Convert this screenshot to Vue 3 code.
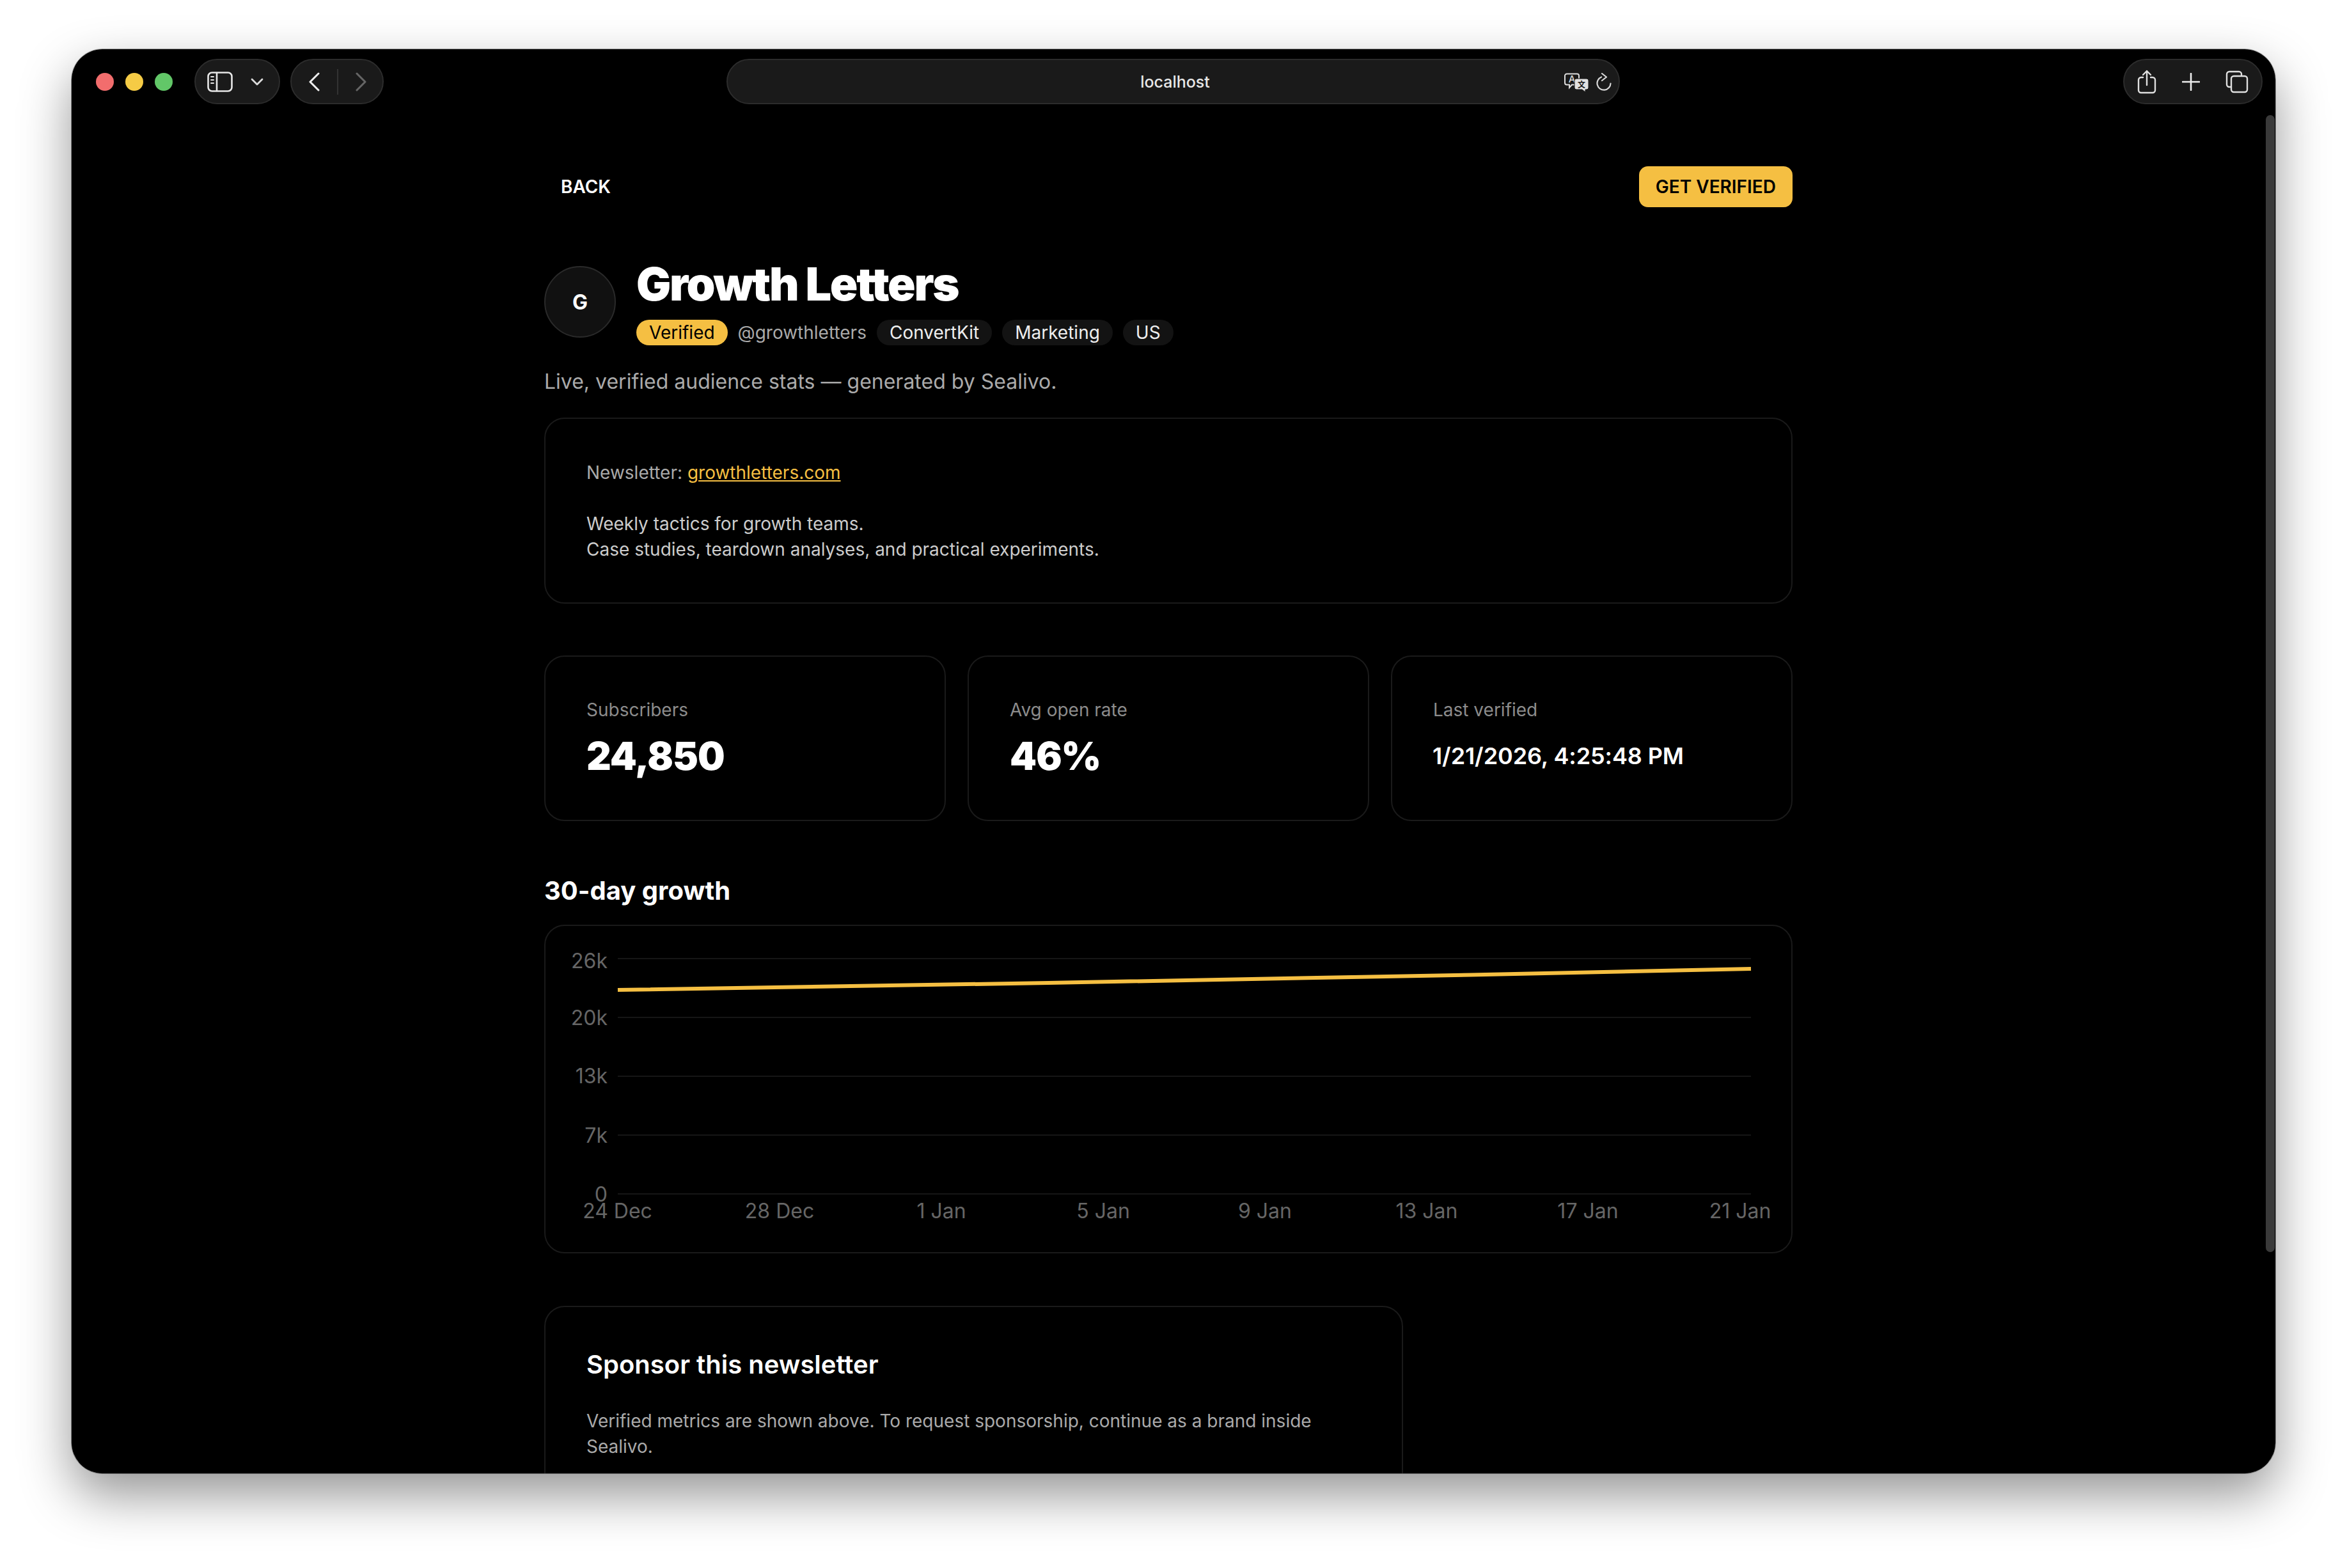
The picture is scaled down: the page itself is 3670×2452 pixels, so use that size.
<script setup>
const L = 853, T = 1447
const grid = [1498, 1590, 1682, 1774, 1866]
const yLabels = [
  { t: '26k', y: 1502 }, { t: '20k', y: 1591 }, { t: '13k', y: 1682 }, { t: '7k', y: 1775 }, { t: '0', y: 1867 },
]
const xLabels = [
  ['24 Dec', 965.5], ['28 Dec', 1219], ['1 Jan', 1472], ['5 Jan', 1725],
  ['9 Jan', 1978], ['13 Jan', 2231], ['17 Jan', 2483], ['21 Jan', 2721],
]
const line = [[966, 1547], [1640, 1536], [2300, 1523.5], [2738, 1514]]
  .map(([x, y]) => `${x - L},${y - T}`).join(' ')
const gx1 = 966 - L, gx2 = 2738 - L
const stats = [
  { label: 'Subscribers', value: '24,850', big: true },
  { label: 'Avg open rate', value: '46%', big: true },
  { label: 'Last verified', value: '1/21/2026, 4:25:48 PM', big: false },
]
</script>

<template>
  <div class="stage">
    <div class="window">
      <header class="toolbar">
        <div class="lights">
          <span class="light red"></span><span class="light yellow"></span><span class="light green"></span>
        </div>
        <div class="pill side">
          <svg width="40" height="32" viewBox="0 0 40 32" fill="none" stroke="#e6e6e6" stroke-width="2.6" stroke-linecap="round">
            <rect x="1.5" y="1.5" width="37" height="29" rx="6" />
            <path d="M15 2v28" />
            <path d="M6 8h4M6 13h4M6 18h4" stroke-width="2" />
          </svg>
          <svg width="20" height="12" viewBox="0 0 20 12" fill="none" stroke="#dcdcdc" stroke-width="2.8" stroke-linecap="round" stroke-linejoin="round">
            <path d="M2 2l8 8 8-8" />
          </svg>
        </div>
        <div class="pill nav">
          <svg width="18" height="30" viewBox="0 0 18 30" fill="none" stroke="#eee" stroke-width="3" stroke-linecap="round" stroke-linejoin="round">
            <path d="M16 2L3 15l13 13" />
          </svg>
          <span class="sep"></span>
          <svg width="18" height="30" viewBox="0 0 18 30" fill="none" stroke="#666" stroke-width="3" stroke-linecap="round" stroke-linejoin="round">
            <path d="M2 2l13 13L2 28" />
          </svg>
        </div>
        <div class="url">
          <span class="host">localhost</span>
          <svg class="translate" width="40" height="30" viewBox="0 0 40 30" fill="none">
            <path d="M4 1.5h16a3 3 0 0 1 3 3v11a3 3 0 0 1-3 3h-8l-4 4.5v-4.5H4a3 3 0 0 1-3-3v-11a3 3 0 0 1 3-3z" stroke="#ddd" stroke-width="2" />
            <text x="12" y="15" class="glyph-a">A</text>
            <path d="M19 9h16a3 3 0 0 1 3 3v11a3 3 0 0 1-3 3h-2v4l-5-4h-9a3 3 0 0 1-3-3V12a3 3 0 0 1 3-3z" fill="#e2e2e2" stroke="#1a1a1a" stroke-width="1" />
            <text x="27" y="23" class="glyph-z">文</text>
          </svg>
          <svg class="reload" width="24" height="28" viewBox="0 0 24 28" fill="none" stroke="#d8d8d8" stroke-width="2.2" stroke-linecap="round" stroke-linejoin="round">
            <path d="M8 6.5A10.5 10.5 0 1 0 22.5 16.500" />
            <path d="M9 1l7 5.500-7 5.500" />
          </svg>
        </div>
        <div class="pill tools">
          <svg width="30" height="38" viewBox="0 0 30 38" fill="none" stroke="#e0e0e0" stroke-width="2.4" stroke-linecap="round" stroke-linejoin="round">
            <path d="M9 12H6a4 4 0 0 0-4 4v16a4 4 0 0 0 4 4h18a4 4 0 0 0 4-4V16a4 4 0 0 0-4-4h-3" />
            <path d="M15 24V2M9 8l6-6 6 6" />
          </svg>
          <svg width="28" height="28" viewBox="0 0 28 28" fill="none" stroke="#eee" stroke-width="2.6" stroke-linecap="round">
            <path d="M14 1v26M1 14h26" />
          </svg>
          <svg width="36" height="36" viewBox="0 0 36 36" fill="none" stroke="#e0e0e0" stroke-width="2.400">
            <path d="M8 26H6a4 4 0 0 1-4-4V6a4 4 0 0 1 4-4h15a4 4 0 0 1 4 4v2" />
            <rect x="9" y="9" width="25" height="25" rx="4" />
          </svg>
        </div>
      </header>

      <main class="page">
        <div class="topbar">
          <a class="back">BACK</a>
          <a class="cta">GET VERIFIED</a>
        </div>

        <section class="head">
          <div class="avatar">G</div>
          <div class="head-text">
            <h1>Growth Letters</h1>
            <div class="chips">
              <span class="chip verified">Verified</span>
              <span class="handle">@growthletters</span>
              <span class="chip">ConvertKit</span>
              <span class="chip">Marketing</span>
              <span class="chip">US</span>
            </div>
          </div>
        </section>

        <p class="sub">Live, verified audience stats — generated by Sealivo.</p>

        <section class="card about">
          <p class="site">Newsletter: <a class="link">growthletters.com</a></p>
          <p class="desc">Weekly tactics for growth teams.<br />Case studies, teardown analyses, and practical experiments.</p>
        </section>

        <section class="stats">
          <div v-for="s in stats" :key="s.label" class="card stat">
            <div class="stat-label">{{ s.label }}</div>
            <div class="stat-value" :class="{ small: !s.big }">{{ s.value }}</div>
          </div>
        </section>

        <h2>30-day growth</h2>

        <section class="card chart">
          <svg width="1948" height="510" viewBox="0 0 1948 510">
            <line v-for="g in grid" :key="g" :x1="gx1" :x2="gx2" :y1="g - T" :y2="g - T" stroke="#161616" stroke-width="2" />
            <polyline :points="line" fill="none" stroke="#f5bf42" stroke-width="6" />
            <text v-for="l in yLabels" :key="l.t" class="tick" text-anchor="end" :x="950 - L" :y="l.y - T + 11">{{ l.t }}</text>
            <text v-for="x in xLabels" :key="x[0]" class="tick" text-anchor="middle" :x="x[1] - L" :y="1893 - T + 11">{{ x[0] }}</text>
          </svg>
        </section>

        <section class="card sponsor">
          <h3>Sponsor this newsletter</h3>
          <p>Verified metrics are shown above. To request sponsorship, continue as a brand inside Sealivo.</p>
        </section>
      </main>

      <div class="scrollbar"></div>
    </div>
  </div>
</template>

<style>
html, body { margin: 0; background: #fff; }
</style>

<style scoped>
.stage {
  width: 3670px;
  height: 2452px;
  padding: 77px 112px 0;
  box-sizing: border-box;
  overflow: hidden;
  background: #fff;
  font-family: Inter, "Liberation Sans", sans-serif;
}
.window {
  position: relative;
  width: 3446px;
  height: 2227px;
  background: #000;
  border-radius: 48px;
  overflow: hidden;
  box-shadow: 0 34px 80px rgba(0, 0, 0, 0.42);
  outline: 1px solid rgba(0,0,0,.35);
  color: #fff;
}
.toolbar {
  display: flex;
  align-items: center;
  height: 71px;
  padding: 15px 20px 0 38px;
  box-sizing: content-box;
}
.lights { display: flex; gap: 18px; margin-right: 34px; }
.light { width: 28px; height: 28px; border-radius: 50%; }
.red { background: #f26d6d; }
.yellow { background: #f5cb45; }
.green { background: #62c768; }
.pill, .url {
  height: 71px;
  box-sizing: border-box;
  background: #1a1a1a;
  border: 2px solid #2c2c2c;
  border-radius: 36px;
  display: flex;
  align-items: center;
}
.side { width: 134px; padding-left: 18px; gap: 28px; margin-right: 16px; }
.nav { width: 146px; padding-left: 26px; gap: 27px; }
.sep { width: 2px; height: 40px; background: #333; }
.url {
  position: relative;
  width: 1397px;
  margin-left: 536px;
  justify-content: center;
}
.host { font-size: 25px; font-weight: 500; color: #e8e8e8; margin-left: 6px; }
.translate { position: absolute; left: 1308px; top: 20px; }
.reload { position: absolute; left: 1358px; top: 20px; }
.glyph-a { font: 500 15px Inter, sans-serif; fill: #ddd; text-anchor: middle; }
.glyph-z { font: 700 12px "Noto Sans CJK SC", sans-serif; fill: #1a1a1a; text-anchor: middle; }
.tools {
  width: 218px;
  margin-left: auto;
  justify-content: space-between;
  padding: 0 20px;
}
.page {
  width: 1952px;
  margin-left: 739px;
  padding-top: 97px;
}
.topbar {
  display: flex;
  justify-content: space-between;
  align-items: center;
  height: 64px;
}
.back {
  font-size: 28px;
  font-weight: 600;
  padding-left: 26px;
}
.cta {
  height: 64px;
  padding: 0 26px;
  display: flex;
  align-items: center;
  background: #f5bf42;
  color: #000;
  border-radius: 14px;
  font-size: 28px;
  font-weight: 600;
}
.head {
  display: flex;
  align-items: flex-start;
  gap: 32px;
  margin-top: 92px;
}
.avatar {
  width: 112px;
  height: 112px;
  box-sizing: border-box;
  border-radius: 50%;
  background: #111;
  border: 2px solid #2a2a2a;
  display: flex;
  align-items: center;
  justify-content: center;
  font-size: 32px;
  font-weight: 700;
}
h1 {
  margin: -12px 0 0;
  font-size: 72px;
  line-height: 80px;
  font-weight: 900;
  letter-spacing: -2.35px;
}
.chips {
  display: flex;
  align-items: center;
  gap: 16px;
  margin-top: 16px;
  font-size: 28px;
}
.chip {
  height: 40px;
  padding: 0 20px;
  display: flex;
  align-items: center;
  border-radius: 20px;
  background: #131313;
  color: #eee;
}
.verified { background: #f5bf42; color: #000; }
.handle { color: #aaa; }
.sub {
  margin: 33px 0 0;
  font-size: 32px;
  line-height: 48px;
  color: #aaa;
}
.card {
  box-sizing: border-box;
  border: 2px solid #1a1a1a;
  border-radius: 32px;
  background: #000;
}
.about {
  height: 291px;
  margin-top: 32px;
  padding: 64px 64px 0;
  font-size: 28px;
  line-height: 40px;
}
.about p { margin: 0; }
.site { color: #aaa; }
.link { color: #f5bf42; text-decoration: underline; }
.desc { color: #ccc; margin-top: 40px !important; }
.stats {
  display: grid;
  grid-template-columns: repeat(3, 1fr);
  gap: 34px;
  margin-top: 81px;
}
.stat {
  height: 259px;
  padding: 63px 64px 0;
}
.stat-label { font-size: 28px; line-height: 40px; color: #8c8c8c; }
.stat-value {
  margin-top: 16px;
  height: 72px;
  display: flex;
  align-items: center;
  font-size: 60px;
  font-weight: 900;
  letter-spacing: -1px;
}
.stat-value.small { font-size: 36px; font-weight: 600; letter-spacing: -0.1px; margin-left: -1px; }
h2 {
  margin: 84px 0 0;
  font-size: 40px;
  line-height: 50px;
  font-weight: 700;
}
.chart {
  height: 514px;
  margin-top: 28px;
}
.chart svg { display: block; }
.tick { font-size: 32px; fill: #666; font-family: Inter, sans-serif; }
.sponsor {
  width: 1343px;
  height: 400px;
  margin-top: 82px;
  padding: 62px 64px 0;
}
h3 {
  margin: 0;
  font-size: 40px;
  line-height: 56px;
  font-weight: 600;
}
.sponsor p {
  margin: 40px 0 0;
  font-size: 28px;
  line-height: 40px;
  color: #aaa;
}
.scrollbar {
  position: absolute;
  right: 1px;
  top: 103px;
  bottom: 346px;
  width: 14px;
  border-radius: 7px;
  background: #3a3a3a;
}
</style>
